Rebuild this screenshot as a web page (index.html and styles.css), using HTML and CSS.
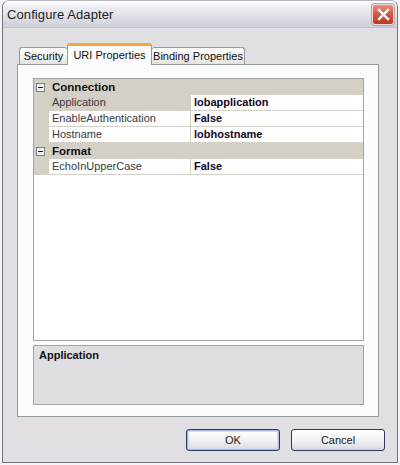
FILE: index.html
```html
<!DOCTYPE html>
<html>
<head>
<meta charset="utf-8">
<link rel="stylesheet" href="styles.css">
</head>
<body>
<div class="window">
  <div class="titlebar">
    <span class="title">Configure Adapter</span>
    <div class="close">
      <svg width="13" height="13" viewBox="0 0 13 13"><path d="M2 2 L11 11 M11 2 L2 11" stroke="#fff" stroke-width="2.4" stroke-linecap="square"/></svg>
    </div>
  </div>
  <div class="client">
    <div class="tabs">
      <div class="tab first">Security</div>
      <div class="tab active">URI Properties</div>
      <div class="tab last">Binding Properties</div>
    </div>
    <div class="panel">
      <div class="pgrid">
        <div class="row cat">
          <div class="margin"><span class="box"></span></div>
          <div class="catname">Connection</div>
        </div>
        <div class="row prop">
          <div class="margin"></div>
          <div class="name sel">Application</div>
          <div class="value">lobapplication</div>
        </div>
        <div class="row prop">
          <div class="margin"></div>
          <div class="name">EnableAuthentication</div>
          <div class="value">False</div>
        </div>
        <div class="row prop">
          <div class="margin"></div>
          <div class="name">Hostname</div>
          <div class="value">lobhostname</div>
        </div>
        <div class="row cat">
          <div class="margin"><span class="box"></span></div>
          <div class="catname">Format</div>
        </div>
        <div class="row prop">
          <div class="margin"></div>
          <div class="name">EchoInUpperCase</div>
          <div class="value">False</div>
        </div>
      </div>
      <div class="desc">
        <div class="desc-title">Application</div>
      </div>
    </div>
    <div class="buttons">
      <div class="btn default">OK</div>
      <div class="btn">Cancel</div>
    </div>
  </div>
</div>
</body>
</html>
```

FILE: styles.css
```css
* { box-sizing: border-box; }
html, body { margin: 0; padding: 0; background: #f4f4f6; }
body { font-family: "Liberation Sans", Arial, sans-serif; font-size: 11px; color: #000; }

.window {
  margin-left: 2px;
  width: 396px;
  height: 463px;
  background: #e0dfe3;
  border: 1px solid #74737c;
  border-top-color: #b9b9c4;
  border-radius: 7px 7px 0 0;
  overflow: hidden;
}

.titlebar {
  height: 27px;
  display: flex;
  align-items: center;
  justify-content: space-between;
  padding: 0 3px 0 4px;
  background: linear-gradient(#ffffff 0%, #ececf2 25%, #dcdce4 70%, #cfcfd9 100%);
  border-bottom: 1px solid #c3c3cc;
}
.title { font-size: 13px; color: #1c1c24; letter-spacing: 0.1px; }
.close {
  width: 22px;
  height: 21px;
  border: 1px solid #f2dada;
  border-radius: 3px;
  background: linear-gradient(#e9907f, #d0533f 55%, #bb3a2a);
  display: flex;
  align-items: center;
  justify-content: center;
  box-shadow: 0 0 0 1px #b8a6a8;
}

.client { padding: 15px 12px 0 14px; }

.tabs { display: flex; align-items: flex-end; height: 21px; padding-left: 2px; position: relative; z-index: 1; }
.tab {
  flex-shrink: 0;
  white-space: nowrap;
  text-align: center;
  height: 17px;
  padding: 0;
  line-height: 16px;
  color: #111;
  background: linear-gradient(#ffffff, #f1f1ef 60%, #e3e2dd);
  border: 1px solid #919b9c;
  border-bottom: none;
  border-radius: 3px 3px 0 0;
}
.tab.first { width: 48px; border-right: none; }
.tab.active {
  height: 22px;
  margin-bottom: -1px;
  width: 85px;
  line-height: 18px;
  background: #fcfcfe;
  border-top: 3px solid #f5a93a;
  margin-left: 0;
}
.tab.last { width: 93px; border-left: none; }

.panel {
  width: 362px;
  height: 353px;
  border: 1px solid #919b9c;
  background: #fcfcfe;
  padding: 13px 14px 0 15px;
  display: flex;
  flex-direction: column;
  gap: 4px;
}

.pgrid {
  height: 263px;
  border: 1px solid #a3a3a7;
  background: #fff;
}
.row { display: grid; grid-template-columns: 15px 142px 1fr; height: 16px; }
.margin { background: #d4d0c8; position: relative; }
.cat { background: #d4d0c8; }
.cat .catname { grid-column: 2 / 4; font-weight: bold; line-height: 16px; padding-left: 3px; color: #111; font-size: 11.5px; }
.box {
  position: absolute;
  left: 2px; top: 4px;
  width: 9px; height: 9px;
  border: 1px solid #7c7c7c;
  background: #f3f2ee;
}
.box::after {
  content: "";
  position: absolute;
  left: 1px; top: 3px;
  width: 5px; height: 1px;
  background: #222;
}
.prop .name {
  line-height: 15px;
  padding-left: 3px;
  color: #3a3a3a;
  border-bottom: 1px solid #d4d0c8;
  border-right: 1px solid #d4d0c8;
  white-space: nowrap;
  overflow: hidden;
}
.prop .name.sel { background: #d4d0c8; }
.prop .value {
  line-height: 15px;
  padding-left: 3px;
  font-weight: bold;
  color: #14061e;
  border-bottom: 1px solid #d4d0c8;
}

.desc {
  height: 60px;
  border: 1px solid #a3a3a7;
  background: #dedde2;
  padding: 3px 5px;
}
.desc-title { font-weight: bold; color: #111; }

.buttons { display: flex; justify-content: flex-end; gap: 11px; padding-top: 12px; padding-right: 0; }
.btn {
  width: 94px;
  height: 22px;
  border: 1px solid #2c3a5e;
  border-radius: 3px;
  background: linear-gradient(#ffffff, #f3f3f5 50%, #e2e1e8 85%, #d2d1da);
  display: flex;
  align-items: center;
  justify-content: center;
  color: #222;
}
.btn.default { box-shadow: inset 0 0 0 1px #aebde6, inset 0 0 0 2px #cfdaf3; }
```
